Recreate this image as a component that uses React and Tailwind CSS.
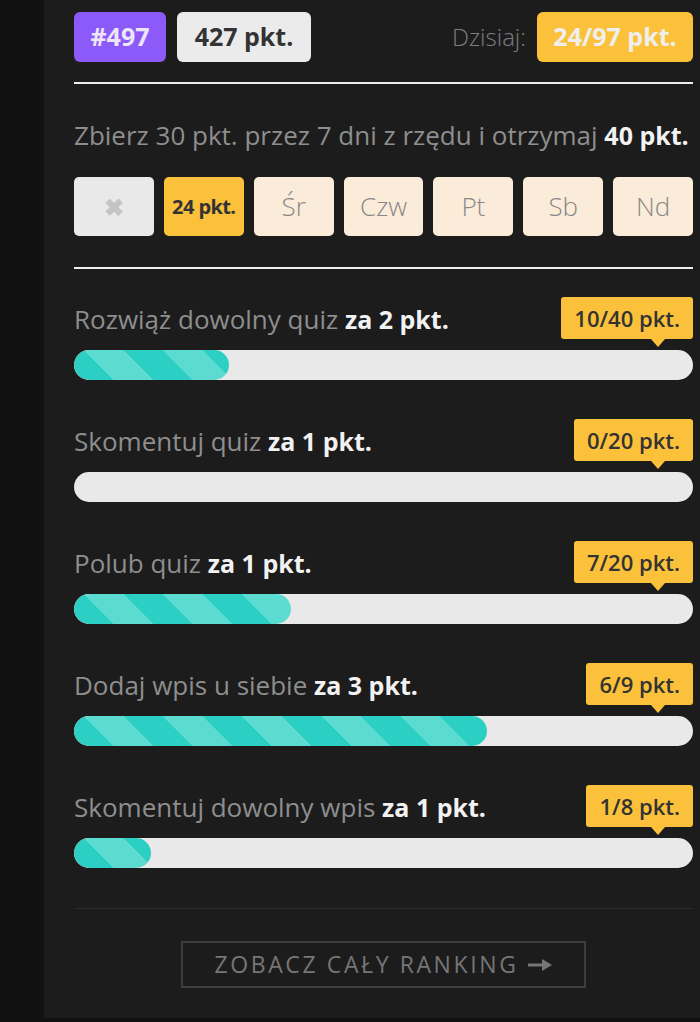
import { useState } from "react";

const days = ["Śr", "Czw", "Pt", "Sb", "Nd"];

const tasks = [
  { name: "Rozwiąż dowolny quiz", reward: "za 2 pkt.", done: 10, total: 40 },
  { name: "Skomentuj quiz", reward: "za 1 pkt.", done: 0, total: 20 },
  { name: "Polub quiz", reward: "za 1 pkt.", done: 7, total: 20 },
  { name: "Dodaj wpis u siebie", reward: "za 3 pkt.", done: 6, total: 9 },
  { name: "Skomentuj dowolny wpis", reward: "za 1 pkt.", done: 1, total: 8 },
];

function Task({ task, first }) {
  const pct = (task.done / task.total) * 100;
  return (
    <div className={first ? "mt-[28px]" : "mt-[39px]"}>
      <div className="flex items-center justify-between h-[42px]">
        <div className="text-[26px] text-[#8e8e8e] leading-none pt-[1px]">
          {task.name}{" "}
          <span className="text-[25px] font-bold text-[#f2f2f2]">{task.reward}</span>
        </div>
        <div className="relative h-[42px] px-[13px] flex items-center rounded-[3px] bg-[#fbc13a] text-[22px] font-semibold text-[#333]">
          {task.done}/{task.total} pkt.
          <span className="absolute top-full right-[28px] w-0 h-0 border-x-[7px] border-t-[8px] border-x-transparent border-t-[#fbc13a]" />
        </div>
      </div>
      <div className="mt-[11px] h-[30px] rounded-full bg-[#e9e9e9] overflow-hidden">
        {pct > 0 && (
          <div
            className="h-full rounded-full bg-[repeating-linear-gradient(45deg,#2ccfc4_0px,#2ccfc4_28px,#5cdbd1_28px,#5cdbd1_56px)]"
            style={{ width: `${pct}%` }}
          />
        )}
      </div>
    </div>
  );
}

export default function App() {
  const [hover, setHover] = useState(false);
  return (
    <div className="h-[1022px] bg-[#111111] flex font-['Open_Sans',sans-serif] overflow-hidden">
      <div className="w-[44px] shrink-0" />
      <div className="flex-1 h-[1018px] bg-[#1c1c1c] pl-[30px] pr-[7px] pt-[12px]">
        {/* naglowek */}
        <div className="flex items-center justify-between">
          <div className="flex gap-[11px]">
            <div className="h-[50px] w-[92px] flex items-center justify-center rounded-[6px] bg-[#8c5af8] text-[25px] font-bold text-[#ece6f8]">
              #497
            </div>
            <div className="h-[50px] w-[134px] flex items-center justify-center rounded-[6px] bg-[#ebebeb] text-[25px] font-bold text-[#333]">
              427 pkt.
            </div>
          </div>
          <div className="flex items-center gap-[11px]">
            <span className="text-[24px] font-light text-[#7d7d7d]">Dzisiaj:</span>
            <div className="h-[50px] w-[156px] flex items-center justify-center rounded-[6px] bg-[#fbc13a] text-[25px] font-bold text-[#efefef]">
              24/97 pkt.
            </div>
          </div>
        </div>

        <div className="mt-[20px] h-[2px] bg-[#eeeeee]" />

        <div className="mt-[36px] text-[26px] leading-[30px] text-[#8e8e8e] whitespace-nowrap">
          Zbierz 30 pkt. przez 7 dni z rzędu i otrzymaj{" "}
          <span className="text-[25px] font-bold text-[#f2f2f2]">40 pkt.</span>
        </div>

        <div className="mt-[27px] grid grid-cols-7 gap-[10px]">
          <div className="h-[59px] rounded-[5px] bg-[#e9e9e9] flex items-center justify-center text-[24px] font-bold text-[#c4c4c4]">
            ✖
          </div>
          <div className="h-[59px] rounded-[5px] bg-[#fbc13a] flex items-center justify-center text-[20px] font-bold tracking-[-0.6px] text-[#333]">
            24 pkt.
          </div>
          {days.map((d) => (
            <div
              key={d}
              className="h-[59px] rounded-[5px] bg-[#fbebd9] flex items-center justify-center text-[26px] font-light text-[#888]"
            >
              {d}
            </div>
          ))}
        </div>

        <div className="mt-[31px] h-[2px] bg-[#eeeeee]" />

        {tasks.map((t, i) => (
          <Task key={i} task={t} first={i === 0} />
        ))}

        <div className="mt-[40px] h-px bg-[#2a2a2a]" />

        <div className="mt-[32px] flex justify-center">
          <button
            onMouseEnter={() => setHover(true)}
            onMouseLeave={() => setHover(false)}
            className={
              "h-[47px] w-[405px] border-2 border-[#3d3d3d] flex items-center justify-center gap-[10px] text-[23px] tracking-[2.6px] " +
              (hover ? "text-[#aaa]" : "text-[#767676]")
            }
          >
            ZOBACZ CAŁY RANKING
            <svg width="24" height="14" viewBox="0 0 24 14" fill="currentColor">
              <rect x="0" y="5.5" width="16" height="3" />
              <path d="M14 1 L24 7 L14 13 Z" />
            </svg>
          </button>
        </div>
      </div>
    </div>
  );
}
